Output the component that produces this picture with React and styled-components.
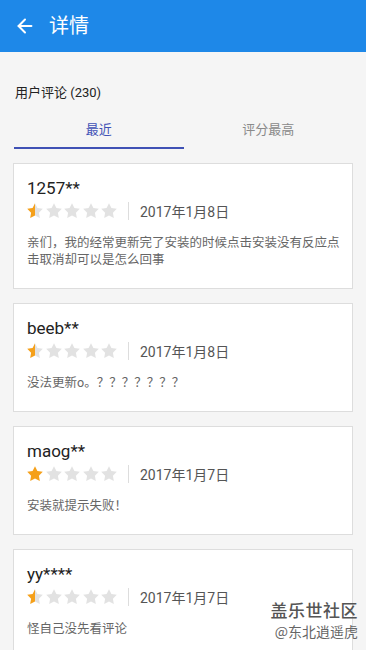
import React, { useId } from 'react';
import styled, { createGlobalStyle } from 'styled-components';
import { ArrowLeft } from 'lucide-react';

const GlobalStyle = createGlobalStyle`
	html, body {
		margin: 0;
		padding: 0;
		background: #f5f5f5;
		font-family: Roboto, "Noto Sans CJK SC", sans-serif;
	}
`;

const Page = styled.div`
	position: relative;
	width: 366px;
	height: 650px;
	overflow: hidden;
	background: #f5f5f5;
`;

const Header = styled.header`
	height: 52px;
	background: #1e88e8;
	display: flex;
	align-items: center;
	padding-left: 14px;
	color: #ffffff;
`;

const Title = styled.h1`
	margin: 0 0 0 13px;
	font-size: 20px;
	font-weight: 400;
	line-height: 24px;
`;

const Body = styled.main`
	padding: 32px 13px 0;
`;

const SectionTitle = styled.div`
	font-size: 13px;
	line-height: 18px;
	color: #222222;
	padding-left: 2px;
`;

const Tabs = styled.div`
	display: flex;
	margin: 14px 0 0 1px;
`;

const Tab = styled.div`
	flex: 1;
	text-align: center;
	font-size: 13px;
	line-height: 18px;
	padding: 5px 0 8px;
	color: ${(p) => (p.active ? '#3f51b5' : '#8a8a8a')};
	border-bottom: 2px solid ${(p) => (p.active ? '#3f51b5' : 'transparent')};
`;

const List = styled.div`
	display: flex;
	flex-direction: column;
	gap: 14px;
	margin-top: 14px;
`;

const Card = styled.div`
	background: #ffffff;
	border: 1px solid #dddddd;
	padding: 14px 12px 20px 13px;
`;

const Name = styled.div`
	font-size: 17px;
	line-height: 20px;
	color: #222222;
`;

const Meta = styled.div`
	display: flex;
	align-items: center;
	height: 20px;
	margin-top: 3px;
`;

const Stars = styled.div`
	display: flex;
	gap: 0.5px;
	margin-left: -1px;
`;

const Divider = styled.span`
	width: 1px;
	height: 18px;
	background: #dddddd;
	margin: 0 11px 0 10px;
`;

const DateText = styled.span`
	font-size: 14px;
	color: #555555;
`;

const Comment = styled.p`
	margin: 13px 0 0;
	font-size: 12.5px;
	line-height: 17px;
	color: #666666;
`;

const Watermark = styled.div`
	position: absolute;
	right: 8px;
	bottom: 9px;
	text-align: right;
	color: #555555;
	font-family: "Noto Sans CJK SC", sans-serif;
`;

const MarkTitle = styled.div`
	font-size: 17px;
	line-height: 22px;
	font-weight: 500;
	letter-spacing: 0.5px;
`;

const MarkUser = styled.div`
	font-size: 14px;
	line-height: 20px;
	color: #666666;
`;

const STAR = 'M12 1.5l3.2 6.6 7.2 1-5.2 5.1 1.25 7.2L12 18l-6.45 3.4 1.25-7.2-5.2-5.1 7.2-1z';

function Star({ fill }) {
	const id = useId();
	return (
		<svg width="18" height="18" viewBox="0 0 24 24">
			<defs>
				<linearGradient id={id}>
					<stop offset={fill} stopColor="#f5a01a" />
					<stop offset={fill} stopColor="#e2e2e2" />
				</linearGradient>
			</defs>
			<path d={STAR} fill={`url(#${id})`} />
		</svg>
	);
}

const reviews = [
	{ name: '1257**', rating: 0.5, date: '2017年1月8日', text: '亲们，我的经常更新完了安装的时候点击安装没有反应点击取消却可以是怎么回事' },
	{ name: 'beeb**', rating: 0.5, date: '2017年1月8日', text: '没法更新o。？？？？？？？' },
	{ name: 'maog**', rating: 1, date: '2017年1月7日', text: '安装就提示失败！' },
	{ name: 'yy****', rating: 0.5, date: '2017年1月7日', text: '怪自己没先看评论' },
];

export default function App() {
	return (
		<Page>
			<GlobalStyle />
			<Header>
				<ArrowLeft size={22} strokeWidth={2.2} />
				<Title>详情</Title>
			</Header>
			<Body>
				<SectionTitle>用户评论 (230)</SectionTitle>
				<Tabs>
					<Tab active>最近</Tab>
					<Tab>评分最高</Tab>
				</Tabs>
				<List>
					{reviews.map((r) => (
						<Card key={r.name}>
							<Name>{r.name}</Name>
							<Meta>
								<Stars>
									{[0, 1, 2, 3, 4].map((i) => (
										<Star key={i} fill={Math.max(0, Math.min(1, r.rating - i))} />
									))}
								</Stars>
								<Divider />
								<DateText>{r.date}</DateText>
							</Meta>
							<Comment>{r.text}</Comment>
						</Card>
					))}
				</List>
			</Body>
			<Watermark>
				<MarkTitle>盖乐世社区</MarkTitle>
				<MarkUser>@东北逍遥虎</MarkUser>
			</Watermark>
		</Page>
	);
}
